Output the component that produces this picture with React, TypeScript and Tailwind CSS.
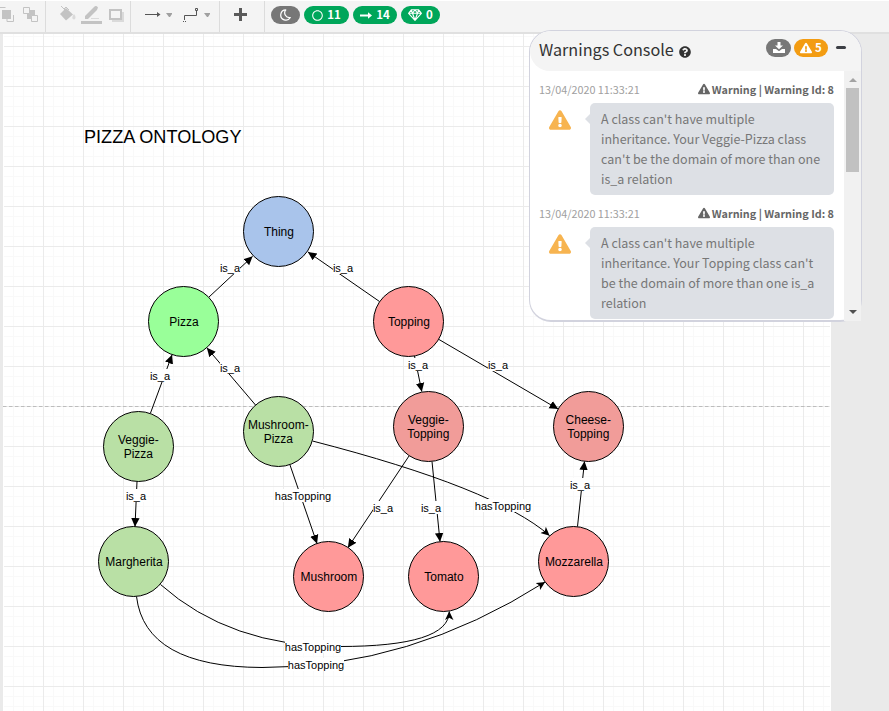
import React from "react";
import {
  FaRegCircle,
  FaExclamationTriangle,
  FaQuestionCircle,
} from "react-icons/fa";

const SOURCE = "font-['Noto_Sans_CJK_SC','Noto_Sans',sans-serif]";

type Node = { x: number; y: number; fill: string; lines: string[] };

const nodes: Node[] = [
  { x: 278.5, y: 231.5, fill: "#a9c4eb", lines: ["Thing"] },
  { x: 183.5, y: 321.5, fill: "#99ff99", lines: ["Pizza"] },
  { x: 408.5, y: 321.5, fill: "#ff9999", lines: ["Topping"] },
  { x: 138.5, y: 446.5, fill: "#b9e0a5", lines: ["Veggie-", "Pizza"] },
  { x: 278.5, y: 431.5, fill: "#b9e0a5", lines: ["Mushroom-", "Pizza"] },
  { x: 428.5, y: 426.5, fill: "#f19c99", lines: ["Veggie-", "Topping"] },
  { x: 588.5, y: 426.5, fill: "#f19c99", lines: ["Cheese-", "Topping"] },
  { x: 133.5, y: 561.5, fill: "#b9e0a5", lines: ["Margherita"] },
  { x: 328.5, y: 576.5, fill: "#ff9999", lines: ["Mushroom"] },
  { x: 443.5, y: 576.5, fill: "#ff9999", lines: ["Tomato"] },
  { x: 573.5, y: 561.5, fill: "#ff9999", lines: ["Mozzarella"] },
];

const straight = [
  "M209 297 L252.500 256.500",
  "M379.500 301.500 L308 252",
  "M150.500 413 L172 355",
  "M255.500 405 L207 348",
  "M414.500 356 L421.800 391.500",
  "M439 339.500 L558 409",
  "M137 481.500 L135 526.500",
  "M290 465 L317 543.500",
  "M409 456 L348 547.500",
  "M432 461.500 L440 541.500",
  "M577.500 526.500 L584.500 461.500",
];

const curved = [
  "M312.500 441 Q495 488 549.500 535.500",
  "M160.500 584.500 Q230 646.500 339 646.500 Q449 646.500 449.300 611.500",
  "M136.500 596.500 Q145 667 262 667.500 Q410 668 545 582",
];

const labels = [
  { x: 230, y: 268, w: 20, t: "is_a" },
  { x: 343, y: 268, w: 20, t: "is_a" },
  { x: 160, y: 376, w: 20, t: "is_a" },
  { x: 230, y: 368, w: 20, t: "is_a" },
  { x: 418, y: 365, w: 20, t: "is_a" },
  { x: 498, y: 365, w: 20, t: "is_a" },
  { x: 136, y: 496, w: 20, t: "is_a" },
  { x: 303, y: 496, w: 56, t: "hasTopping" },
  { x: 383, y: 508, w: 20, t: "is_a" },
  { x: 431, y: 508, w: 20, t: "is_a" },
  { x: 503, y: 506, w: 56, t: "hasTopping" },
  { x: 580, y: 485, w: 20, t: "is_a" },
  { x: 313, y: 647, w: 56, t: "hasTopping" },
  { x: 316, y: 665, w: 56, t: "hasTopping" },
];

function Diagram() {
  return (
    <svg
      width="889"
      height="711"
      className="absolute left-0 top-0 font-['Liberation_Sans',Arial,sans-serif]"
    >
      <defs>
        <pattern id="grid" x="3" y="6" width="40" height="40" patternUnits="userSpaceOnUse">
          <path
            d="M10.500 0V40M20.500 0V40M30.500 0V40M0 10.500H40M0 20.500H40M0 30.500H40"
            stroke="#f9f9f9"
          />
          <path d="M.5 0V40M0 .5H40" stroke="#ebebeb" />
        </pattern>
        <marker id="block" markerUnits="userSpaceOnUse" markerWidth="10" markerHeight="10" refX="8.500" refY="4.500" orient="auto">
          <path d="M0 .3L8.700 4.500L0 8.700Z" />
        </marker>
        <marker id="classic" markerUnits="userSpaceOnUse" markerWidth="10" markerHeight="10" refX="8.500" refY="4.500" orient="auto">
          <path d="M0 .3L8.700 4.500L0 8.700L2.200 4.500Z" />
        </marker>
      </defs>
      <rect x="0" y="34" width="889" height="677" fill="#eaeaea" />
      <rect x="3" y="34" width="828" height="677" fill="#fff" />
      <rect x="4" y="34" width="826" height="677" fill="url(#grid)" />
      <path d="M3 406.500H831" stroke="#bdbdbd" strokeDasharray="3.500 2.500" />
      <text x="84" y="143" fontSize="18.100">
        PIZZA ONTOLOGY
      </text>
      <g fill="none" stroke="#000">
        {straight.map((d) => (
          <path key={d} d={d} markerEnd="url(#block)" />
        ))}
        {curved.map((d) => (
          <path key={d} d={d} markerEnd="url(#classic)" />
        ))}
      </g>
      {nodes.map((n) => (
        <g key={n.lines.join("")}>
          <circle cx={n.x} cy={n.y} r="35" fill={n.fill} stroke="#000" />
          {n.lines.map((l, i) => (
            <text
              key={l}
              x={n.x + (n.lines.length > 1 ? -0.2 : 0.4)}
              y={n.lines.length > 1 ? n.y - 2.5 + i * 14 : n.y + 4.5}
              fontSize="12"
              textAnchor="middle"
            >
              {l}
            </text>
          ))}
        </g>
      ))}
      {labels.map((l, i) => (
        <g key={i}>
          <rect x={l.x - l.w / 2} y={l.y - 7} width={l.w} height="13" fill="#fff" />
          <text x={l.x} y={l.y + 4} fontSize="11" textAnchor="middle">
            {l.t}
          </text>
        </g>
      ))}
    </svg>
  );
}

function Diamond() {
  return (
    <svg width="14" height="12" viewBox="0 0 14 12" fill="none" stroke="#fff" strokeWidth="1.100" strokeLinejoin="round">
      <path d="M3.300 .8H10.700L13.400 4.300L7 11.300L.6 4.300ZM.6 4.300H13.400M3.300 .8L4.500 4.300L7 11.300L9.500 4.300L10.700 .8M4.500 4.300L7 .8L9.500 4.300" />
    </svg>
  );
}

function Toolbar() {
  const pill = "flex h-[18px] items-center justify-center rounded-full text-[11.5px] font-bold leading-none text-white";
  return (
    <div className={`relative flex h-[34px] border-b-2 border-[#e0e0e0] border-t border-t-white bg-[#f4f4f4] ${SOURCE}`}>
      <div className="w-[46px] border-r border-[#dcdcdc]">
        <svg width="45" height="31" viewBox="0 1 45 31" fill="none" stroke="#c3c3c3">
          <path d="M0 7.500H5.500M13.500 15V21.500H7V18.500" />
          <path d="M2 10h9v9H2z" fill="#c3c3c3" stroke="none" />
          <path d="M27 10h8v9h-8z" fill="#c3c3c3" stroke="none" />
          <path d="M23.500 7.500h6v6h-6zM31.500 15.500h6v6h-6z" fill="#f4f4f4" />
        </svg>
      </div>
      <div className="w-[85px] border-r border-[#dcdcdc]">
        <svg width="84" height="31" viewBox="46 1 84 31" fill="#c3c3c3">
          <path d="M60 14L66 8L73 14.500L66 20.500Z" />
          <path d="M61 6L68 13M64 9L66 7L69 10" fill="none" stroke="#c3c3c3" />
          <path d="M74 14C76 16.500 76 19 74 19.500C71.500 19 72 16.500 74 14Z" fill="#dadada" />
          <path d="M85 19V16L94 7Q96 5 98 7.500L97 10L88 19Z" />
          <path d="M91 18h8v1h-8z" fill="#dadada" />
          <path d="M81 21h21v3H81z" />
          <path d="M112 12h12v10h-12z" fill="#dadada" />
          <path d="M110 10h11v9h-11z" fill="#f4f4f4" stroke="#c3c3c3" strokeWidth="2" />
        </svg>
      </div>
      <div className="w-[89px] border-r border-[#dcdcdc]">
        <svg width="88" height="31" viewBox="131 1 88 31" fill="none" stroke="#555">
          <path d="M145 14.500H158" />
          <path d="M157 12L160.500 14.500L157 17Z" fill="#555" stroke="none" />
          <path d="M166 13h6v1l-2 3h-1zM204 13h6v1l-2 3h-1z" fill="#a0a0a0" stroke="none" />
          <path d="M184.500 20V15.500H196.500V11M195.500 8.500h2v2h-2zM183 21.500h1M185 21.500h1" />
        </svg>
      </div>
      <div className="flex w-[45px] border-r border-[#dcdcdc]">
        <svg width="44" height="31" viewBox="220 1 44 31" fill="#5a5a5a">
          <path d="M239 8h3v5h5v3h-5v5h-3v-5h-5v-3h5z" />
        </svg>
      </div>
      <div className="flex gap-1 pl-1.5 pt-[5px]">
        <div className={`${pill} w-[29px] bg-[#777777]`}>
          <svg width="11" height="12" viewBox="0 0 11 12" fill="none" stroke="#fff" strokeWidth="1.200" strokeLinejoin="round">
            <path d="M5.800 .9A5.100 5.100 0 1 0 10.300 8.500A4.700 4.700 0 0 1 5.800 .9Z" />
          </svg>
        </div>
        <div className={`${pill} w-[45px] gap-1 bg-[#00a65a]`}>
          <FaRegCircle className="h-[11px] w-[11px]" />
          <span>11</span>
        </div>
        <div className={`${pill} w-[44px] gap-1 bg-[#00a65a]`}>
          <svg width="12" height="7" viewBox="0 0 12 7" fill="#fff">
            <path d="M0 2.500H8V.2L12 3.500L8 6.800V4.500H0Z" />
          </svg>
          <span>14</span>
        </div>
        <div className={`${pill} w-[39px] gap-1 bg-[#00a65a]`}>
          <Diamond />
          <span>0</span>
        </div>
      </div>
    </div>
  );
}

function Warning({ lines }: { lines: string[] }) {
  return (
    <div className="h-[124px] w-[294px]">
      <div className="-ml-px flex h-[20px] items-center justify-between text-[10.800px] leading-[20px]">
        <span className="whitespace-nowrap text-[#a0a0a0]">13/04/2020 11:33:21</span>
        <span className="flex items-center gap-[2px] whitespace-nowrap font-bold text-[#666]">
          <FaExclamationTriangle className="h-3 w-3" />
          Warning | Warning Id: 8
        </span>
      </div>
      <div className="flex pt-1">
        <div className="flex w-[50px] items-start pl-[9px] pt-[7px]">
          <FaExclamationTriangle className="h-[20px] w-[22px] text-[#f7b450]" />
        </div>
        <div className="relative h-[92px] w-[244px] rounded-[5px] bg-[#dde0e5] pl-[11px] pt-1.5 text-[12.500px] leading-[20px] text-[#777]">
          <i className="absolute -left-[5px] top-[11px] h-0 w-0 border-y-[5px] border-r-[5px] border-y-transparent border-r-[#dde0e5]" />
          {lines.map((l) => (
            <div key={l} className="whitespace-nowrap">
              {l}
            </div>
          ))}
        </div>
      </div>
    </div>
  );
}

function Console() {
  return (
    <section className={`absolute left-[529px] top-[30px] h-[292px] w-[333px] ${SOURCE}`}>
      <div className="h-full overflow-hidden rounded-[22px] border border-b-2 border-[#d2d3de] bg-white">
        <header className="flex h-10 items-center rounded-t-[22px] rounded-bl-[22px] bg-[#f4f4f4] pl-[9px]">
          <h3 className="-mt-[3px] whitespace-nowrap text-[16.200px] leading-none text-[#333]">Warnings Console</h3>
          <FaQuestionCircle className="ml-[5px] mt-px h-3 w-3 text-[#333]" />
          <div className="mb-[7px] ml-auto mr-[15px] flex items-center">
            <span className="flex h-[18px] w-[25px] items-center justify-center rounded-full bg-[#777]">
              <svg width="12" height="11" viewBox="0 0 12 11" fill="#fff">
                <path d="M4.500 0h3v3.500H10L6 7.300L2 3.500h2.500zM0 7h3l3 2.200L9 7h3v4H0z" />
              </svg>
            </span>
            <span className="ml-[3px] flex h-[18px] w-[34px] items-center justify-center gap-[3px] rounded-full bg-[#f39c12] text-[11.500px] font-bold leading-none text-white">
              <FaExclamationTriangle className="h-3 w-3" />5
            </span>
            <span className="ml-2 h-[3px] w-2.5 rounded-sm bg-[#3c3f45]" />
          </div>
        </header>
        <div className="h-[249px] overflow-hidden pl-2.5 pt-2">
          <Warning
            lines={[
              "A class can't have multiple",
              "inheritance. Your Veggie-Pizza class",
              "can't be the domain of more than one",
              "is_a relation",
            ]}
          />
          <Warning
            lines={[
              "A class can't have multiple",
              "inheritance. Your Topping class can't",
              "be the domain of more than one is_a",
              "relation",
            ]}
          />
        </div>
      </div>
      <div className="absolute left-[315px] top-[41px] flex h-[250px] w-[17px] flex-col items-center bg-[#f1f1f1]">
        <i className="mt-[7px] h-0 w-0 border-x-4 border-b-4 border-x-transparent border-b-[#a3a3a3]" />
        <div className="mt-1.5 h-[84px] w-[13px] bg-[#c1c1c1]" />
        <i className="mb-[7px] mt-auto h-0 w-0 border-x-4 border-t-4 border-x-transparent border-t-[#505050]" />
      </div>
    </section>
  );
}

export default function App() {
  return (
    <div className="relative h-[711px] w-[889px] overflow-hidden bg-[#eaeaea]">
      <Diagram />
      <Toolbar />
      <Console />
    </div>
  );
}
